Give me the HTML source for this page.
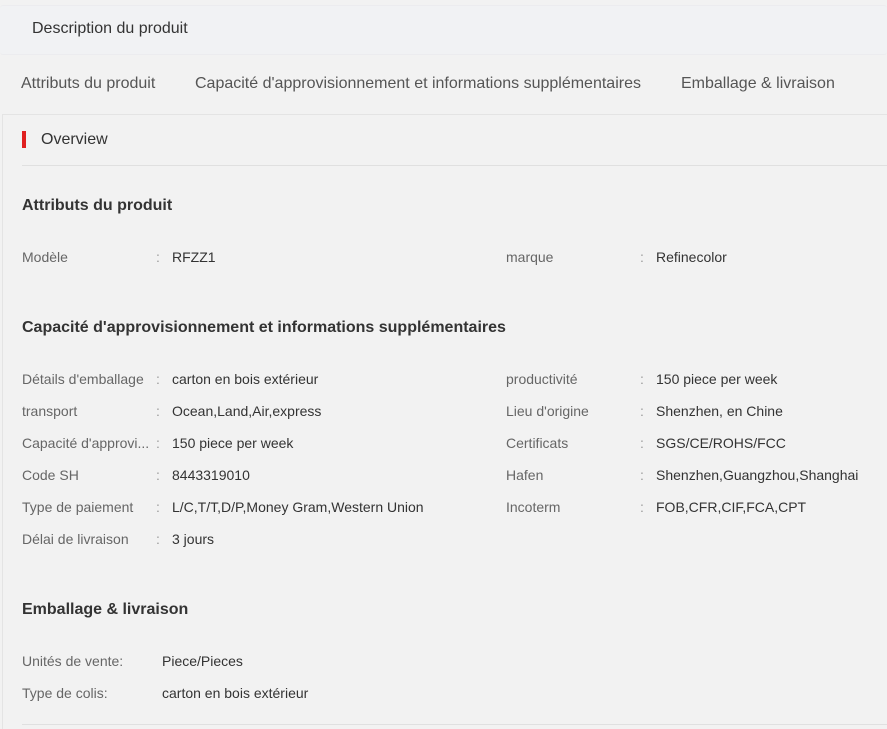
<!DOCTYPE html>
<html><head><meta charset="utf-8"><style>
body{margin:0;width:887px;height:729px;background:#f2f2f2;font-family:"Liberation Sans",Arial,sans-serif;position:relative;overflow:hidden}
.a{position:absolute;white-space:nowrap;line-height:20px;height:20px}
.l{color:#666;font-size:14px}
.v{color:#333;font-size:14px}
.c{color:#999;font-size:14px}
.h{color:#333;font-size:16px;font-weight:bold}
.t{color:#555;font-size:16px}
</style></head><body>
<div style="position:absolute;left:0;top:5px;width:887px;height:48px;background:#f1f2f4;border-top:1px solid #ececef;border-bottom:1px solid #ececef;border-radius:3px"></div>
<div class="a" style="left:32px;top:19px;font-size:16px;color:#333">Description du produit</div>
<div class="a t" style="left:21px;top:74px">Attributs du produit</div>
<div class="a t" style="left:195px;top:74px">Capacité d'approvisionnement et informations supplémentaires</div>
<div class="a t" style="left:681px;top:74px">Emballage &amp; livraison</div>
<div style="position:absolute;left:2px;top:114px;width:885px;height:1px;background:#e4e4e4"></div>
<div style="position:absolute;left:2px;top:114px;width:1px;height:615px;background:#e4e4e4"></div>
<div style="position:absolute;left:22px;top:131px;width:4px;height:17px;background:#e02020"></div>
<div class="a" style="left:41px;top:130px;font-size:16px;color:#333">Overview</div>
<div style="position:absolute;left:22px;top:165px;width:865px;height:1px;background:#e0e0e0"></div>

<div class="a h" style="left:22px;top:196px">Attributs du produit</div>
<div class="a l" style="left:22px;top:247px">Modèle</div><div class="a c" style="left:156px;top:247px">:</div><div class="a v" style="left:172px;top:247px">RFZZ1</div>
<div class="a l" style="left:506px;top:247px">marque</div><div class="a c" style="left:640px;top:247px">:</div><div class="a v" style="left:656px;top:247px">Refinecolor</div>

<div class="a h" style="left:22px;top:318px">Capacité d'approvisionnement et informations supplémentaires</div>
<div class="a l" style="left:22px;top:369px">Détails d'emballage</div><div class="a c" style="left:156px;top:369px">:</div><div class="a v" style="left:172px;top:369px">carton en bois extérieur</div>
<div class="a l" style="left:22px;top:401px">transport</div><div class="a c" style="left:156px;top:401px">:</div><div class="a v" style="left:172px;top:401px">Ocean,Land,Air,express</div>
<div class="a l" style="left:22px;top:433px">Capacité d'approvi...</div><div class="a c" style="left:156px;top:433px">:</div><div class="a v" style="left:172px;top:433px">150 piece per week</div>
<div class="a l" style="left:22px;top:465px">Code SH</div><div class="a c" style="left:156px;top:465px">:</div><div class="a v" style="left:172px;top:465px">8443319010</div>
<div class="a l" style="left:22px;top:497px">Type de paiement</div><div class="a c" style="left:156px;top:497px">:</div><div class="a v" style="left:172px;top:497px">L/C,T/T,D/P,Money Gram,Western Union</div>
<div class="a l" style="left:22px;top:529px">Délai de livraison</div><div class="a c" style="left:156px;top:529px">:</div><div class="a v" style="left:172px;top:529px">3 jours</div>

<div class="a l" style="left:506px;top:369px">productivité</div><div class="a c" style="left:640px;top:369px">:</div><div class="a v" style="left:656px;top:369px">150 piece per week</div>
<div class="a l" style="left:506px;top:401px">Lieu d'origine</div><div class="a c" style="left:640px;top:401px">:</div><div class="a v" style="left:656px;top:401px">Shenzhen, en Chine</div>
<div class="a l" style="left:506px;top:433px">Certificats</div><div class="a c" style="left:640px;top:433px">:</div><div class="a v" style="left:656px;top:433px">SGS/CE/ROHS/FCC</div>
<div class="a l" style="left:506px;top:465px">Hafen</div><div class="a c" style="left:640px;top:465px">:</div><div class="a v" style="left:656px;top:465px">Shenzhen,Guangzhou,Shanghai</div>
<div class="a l" style="left:506px;top:497px">Incoterm</div><div class="a c" style="left:640px;top:497px">:</div><div class="a v" style="left:656px;top:497px">FOB,CFR,CIF,FCA,CPT</div>

<div class="a h" style="left:22px;top:600px">Emballage &amp; livraison</div>
<div class="a l" style="left:22px;top:651px">Unités de vente:</div><div class="a v" style="left:162px;top:651px">Piece/Pieces</div>
<div class="a l" style="left:22px;top:683px">Type de colis:</div><div class="a v" style="left:162px;top:683px">carton en bois extérieur</div>
<div style="position:absolute;left:22px;top:724px;width:865px;height:1px;background:#e0e0e0"></div>
</body></html>
